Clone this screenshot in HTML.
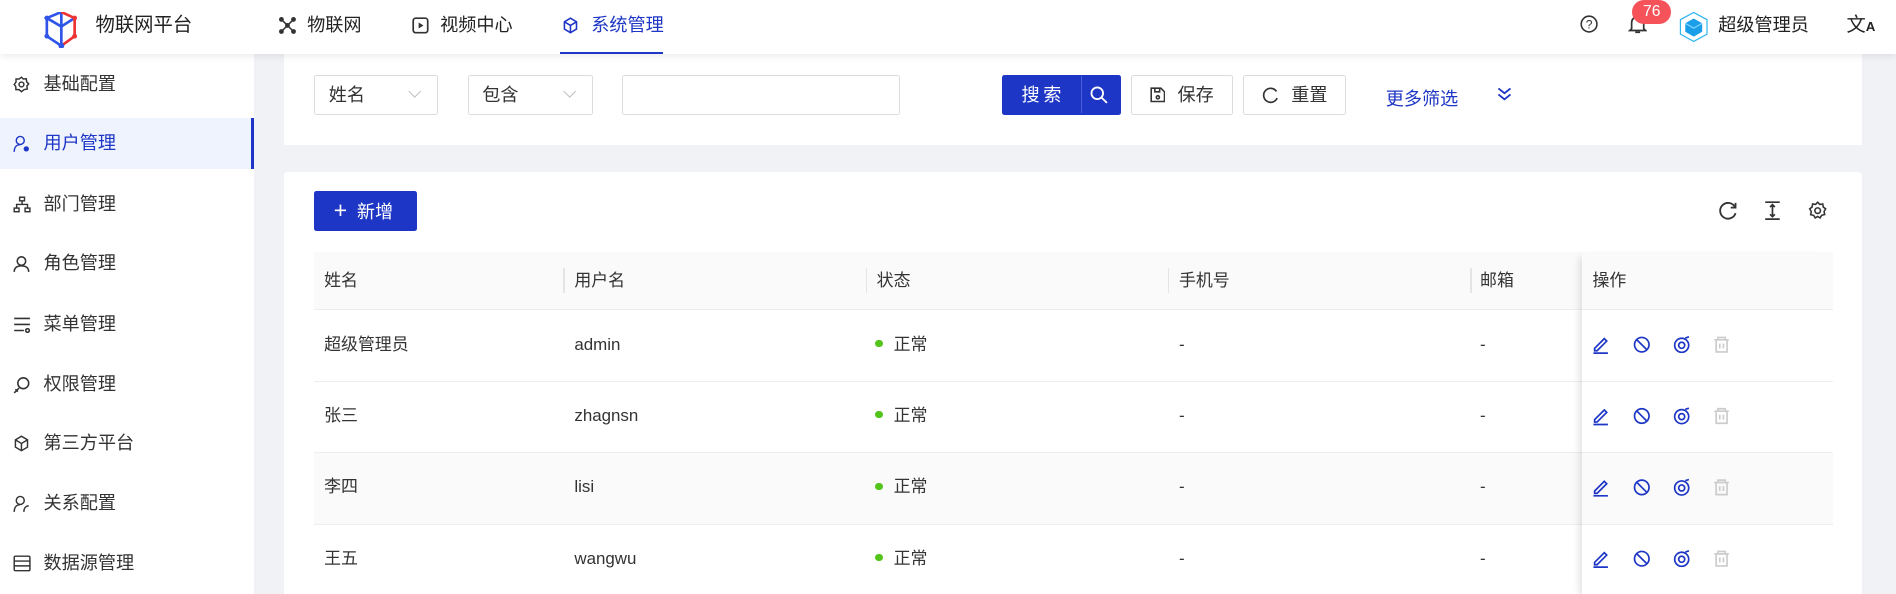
<!DOCTYPE html>
<html><head><meta charset="utf-8"><style>
*{box-sizing:border-box;margin:0;padding:0}
html,body{width:1896px;height:594px;overflow:hidden}
body{background:#f0f2f5;font-family:"Liberation Sans","Noto Sans CJK SC",sans-serif;color:#333}
#w{zoom:1.2092;width:1568px;height:491px;position:relative;overflow:hidden}
.a{position:absolute}
.hdr{left:0;top:0;width:1568px;height:45px;background:#fff;box-shadow:0 2px 6px rgba(0,0,0,.08);z-index:5}
.hdr .t{position:absolute;top:0;line-height:42px;font-size:15px;color:#222}
.side{left:0;top:45px;width:210px;height:446px;background:#fff}
.mi{position:absolute;left:0;width:210px;height:42px;line-height:42px;font-size:15px;color:#333;padding-left:36px}
.mi svg{position:absolute;left:11px;top:14px}
.mi.on{background:#eef3fe;color:#1e36c5;border-right:3px solid #1e36c5}
.card{background:#fff;left:235px;width:1305px}
.sel{position:absolute;top:62px;height:33px;border:1px solid #dcdcdc;border-radius:2px;font-size:15px;line-height:33px;padding-left:11px;color:#333}
.sel.dd:after{content:"";position:absolute;right:14px;top:9px;width:7px;height:7px;border-right:1px solid #bbb;border-bottom:1px solid #bbb;transform:rotate(45deg)}
.btn{position:absolute;top:62px;height:33px;border:1px solid #dcdcdc;border-radius:2px;font-size:15px;line-height:33px;background:#fff;color:#333}
.th{position:absolute;top:208px;height:48px;line-height:48px;font-size:14px;color:#333}
.td{position:absolute;font-size:14px;color:#333;line-height:20px}
.sep{position:absolute;top:222px;width:1px;height:20px;background:#e5e5e5}
</style></head><body><div id="w">
<div class="a hdr">
 <svg class="a" style="left:35px;top:10px" width="32" height="30" viewBox="0 0 32 30"><path d="M4 5 L16 0 L16 12 L4 5Z M4 5 L4 20 L16 28 L16 12" fill="none" stroke="#2f55e8" stroke-width="2.2"/><path d="M16 0 L27 5 L27 20 L16 28" fill="none" stroke="#e33" stroke-width="2.2"/><path d="M16 12 L27 5" stroke="#2f55e8" stroke-width="2.2"/><circle cx="4" cy="5" r="2" fill="#2f55e8"/><circle cx="27" cy="5" r="2" fill="#e33"/><circle cx="27" cy="20" r="2" fill="#e33"/><circle cx="16" cy="28" r="2.4" fill="#2f55e8"/><circle cx="4" cy="20" r="2" fill="#2f55e8"/></svg>
 <div class="t" style="left:79px;font-size:16px">物联网平台</div>
 <svg class="a" style="left:231px;top:14px" width="14" height="14" viewBox="0 0 14 14" fill="#333"><circle cx="2" cy="2" r="2"/><circle cx="12" cy="2" r="2"/><circle cx="2" cy="12" r="2"/><circle cx="12" cy="12" r="2"/><circle cx="7" cy="7" r="2"/><path d="M2 2L12 12M12 2L2 12" stroke="#333" stroke-width="1.3"/></svg>
 <div class="t" style="left:254px">物联网</div>
 <svg class="a" style="left:341px;top:14px" width="14" height="14" viewBox="0 0 14 14"><rect x="1" y="1" width="12" height="12" rx="2" fill="none" stroke="#333" stroke-width="1.4"/><path d="M5.5 4.5L9.5 7L5.5 9.5Z" fill="#333"/></svg>
 <div class="t" style="left:364px">视频中心</div>
 <svg class="a" style="left:465px;top:14px" width="14" height="14" viewBox="0 0 14 14" fill="none" stroke="#1e36c5" stroke-width="1.3"><path d="M2 4L7 1L12 4L12 10L7 13L2 10Z M7 7L7 13 M2 4L7 7L12 4"/></svg>
 <div class="t" style="left:489px;color:#1e36c5">系统管理</div>
 <div class="a" style="left:463px;top:43px;width:85px;height:2px;background:#1e36c5"></div>
 <svg class="a" style="left:1307px;top:12px" width="15" height="15" viewBox="0 0 15 15"><circle cx="7.5" cy="7.5" r="6.5" fill="none" stroke="#333" stroke-width="1.3"/><text x="7.5" y="11" font-size="10" text-anchor="middle" fill="#333" font-family="Liberation Sans">?</text></svg>
 <svg class="a" style="left:1346px;top:11px" width="16" height="18" viewBox="0 0 16 18" fill="none" stroke="#333" stroke-width="1.4"><path d="M3 13V8a5 5 0 0 1 10 0v5l1.5 1.5h-13Z M6 16h4"/></svg>
 <div class="a" style="left:1350px;top:0;width:32px;height:20px;background:#f5525a;border-radius:10px;color:#fff;font-size:13px;text-align:center;line-height:20px">76</div>
 <svg class="a" style="left:1388px;top:8px" width="26" height="28" viewBox="0 0 26 28"><path d="M13 2L24 8L24 20L13 26L2 20L2 8Z" fill="none" stroke="#2fb5f0" stroke-width="1"/><path d="M13 7L20 11L20 18L13 22L6 18L6 11Z" fill="#1a9ee8"/><path d="M6 11L13 15L20 11" fill="none" stroke="#7fd3ff"/></svg>
 <div class="t" style="left:1421px">超级管理员</div>
 <div class="t" style="left:1527px;font-size:16px">文<span style="font-size:11px;font-weight:bold">A</span></div>
</div>
<div class="a side">
 <div class="mi" style="top:4px"><svg width="14" height="14" viewBox="0 0 14 14" fill="none" stroke="#333" stroke-width="1.2"><circle cx="7" cy="7" r="2"/><path d="M7 1L8.5 2.5L11 2.3L11.3 4.8L13 6.5L11.5 8.3L11.8 10.8L9.3 11.2L7 13L5 11.3L2.4 11.3L2.3 8.8L1 7L2.5 5L2.5 2.5L5 2.5Z"/></svg>基础配置</div>
 <div class="mi on" style="top:53px;height:42px"><svg width="15" height="15" viewBox="0 0 15 15" fill="none" stroke="#1e36c5" stroke-width="1.2"><circle cx="6" cy="4.5" r="3.3"/><path d="M1 14c0-4 2-6 5-6"/><circle cx="11" cy="11.5" r="1.6" fill="#1e36c5"/></svg>用户管理</div>
 <div class="mi" style="top:103px"><svg width="15" height="14" viewBox="0 0 15 14" fill="none" stroke="#333" stroke-width="1.2"><rect x="5.5" y="1" width="4" height="3"/><rect x="1" y="10" width="4" height="3"/><rect x="10" y="10" width="4" height="3"/><path d="M7.5 4v3M3 10V7h9v3"/></svg>部门管理</div>
 <div class="mi" style="top:152px"><svg width="14" height="15" viewBox="0 0 14 15" fill="none" stroke="#333" stroke-width="1.3"><circle cx="7" cy="5" r="3.5"/><path d="M1 14c0-3.5 2.5-5 6-5s6 1.5 6 5"/></svg>角色管理</div>
 <div class="mi" style="top:202px"><svg width="15" height="14" viewBox="0 0 15 14" fill="none" stroke="#333" stroke-width="1.3"><path d="M1 2h13M1 7h13M1 12h8"/><circle cx="12" cy="12" r="1.5"/></svg>菜单管理</div>
 <div class="mi" style="top:252px"><svg width="15" height="15" viewBox="0 0 15 15" fill="none" stroke="#333" stroke-width="1.3"><circle cx="8.5" cy="6" r="4.5"/><path d="M5 10L1 14M2 11l2 2"/></svg>权限管理</div>
 <div class="mi" style="top:301px"><svg width="14" height="14" viewBox="0 0 14 14" fill="none" stroke="#333" stroke-width="1.2"><path d="M2 4L7 1L12 4L12 10L7 13L2 10Z M7 7L7 13 M2 4L7 7L12 4"/></svg>第三方平台</div>
 <div class="mi" style="top:350px"><svg width="15" height="15" viewBox="0 0 15 15" fill="none" stroke="#333" stroke-width="1.2"><circle cx="6" cy="4.5" r="3.3"/><path d="M1 14c0-4 2-6 5-6M9 14c0-3 1.5-5 4-5"/></svg>关系配置</div>
 <div class="mi" style="top:400px"><svg width="15" height="14" viewBox="0 0 15 14" fill="none" stroke="#333" stroke-width="1.2"><rect x="1" y="1" width="13" height="12" rx="1"/><path d="M1 5h13M1 9h13"/></svg>数据源管理</div>
</div>
<div class="a card" style="top:45px;height:75px"></div>
<div class="sel dd" style="left:260px;width:102px">姓名</div>
<div class="sel dd" style="left:387px;width:103px">包含</div>
<div class="sel" style="left:514px;width:230px"></div>
<div class="btn" style="left:829px;width:98px;background:#1e36c5;border-color:#1e36c5;color:#fff;padding-left:15px;letter-spacing:3px">搜索<span style="position:absolute;left:64px;top:0;width:1px;height:31px;background:#4a5fd6"></span><svg style="position:absolute;left:72px;top:8px" width="15" height="15" viewBox="0 0 15 15" fill="none" stroke="#fff" stroke-width="1.5"><circle cx="6" cy="6" r="4.8"/><path d="M9.5 9.5L14 14"/></svg></div>
<div class="btn" style="left:935px;width:85px;padding-left:38px"><svg style="position:absolute;left:15px;top:9px" width="13" height="13" viewBox="0 0 13 13" fill="none" stroke="#333" stroke-width="1.3"><path d="M1 1h8l3 3v8H1Z M4 1v3h4V1"/><circle cx="6.5" cy="8.5" r="1.3"/></svg>保存</div>
<div class="btn" style="left:1028px;width:85px;padding-left:39px"><svg style="position:absolute;left:15px;top:8px" width="14" height="15" viewBox="0 0 14 15" fill="none" stroke="#333" stroke-width="1.4"><path d="M12 4.5A5.8 5.8 0 1 0 12.5 10"/></svg>重置</div>
<div class="a" style="left:1146px;top:70px;font-size:15px;color:#1e36c5">更多筛选</div>
<svg class="a" style="left:1237px;top:71px" width="14" height="14" viewBox="0 0 14 14" fill="none" stroke="#1e36c5" stroke-width="1.5"><path d="M2 2l5 4 5-4M2 7l5 4 5-4"/></svg>
<div class="a card" style="top:142px;height:360px;border-radius:3px"></div>
<div class="a" style="left:260px;top:158px;width:85px;height:33px;background:#1e36c5;border-radius:2px;color:#fff;font-size:15px;line-height:33px;padding-left:16px"><span style="font-size:19px;font-weight:300;margin-right:8px">+</span>新增</div>
<svg class="a" style="left:1421px;top:166px" width="16" height="16" viewBox="0 0 16 16" fill="none" stroke="#333" stroke-width="1.5"><path d="M14 5A6.5 6.5 0 1 0 14.5 10"/><path d="M14.5 1.5v4h-4"/></svg>
<svg class="a" style="left:1459px;top:166px" width="14" height="16" viewBox="0 0 14 16" fill="none" stroke="#333" stroke-width="1.4"><path d="M1 1h12M1 15h12M7 3v10M5 5l2-2 2 2M5 11l2 2 2-2"/></svg>
<svg class="a" style="left:1495px;top:166px" width="16" height="16" viewBox="0 0 16 16" fill="none" stroke="#333" stroke-width="1.3"><circle cx="8" cy="8" r="2.3"/><path d="M8 1l1.7 1.8 2.5-.3.4 2.5 2 1.5-1.3 2.2.5 2.5-2.5.6L10 14l-2-1.2L6 14l-1.3-2.1-2.5-.6.5-2.5L1.4 6.5l2-1.5.4-2.5 2.5.3Z"/></svg>
<div class="a" style="left:260px;top:208px;width:1256px;height:48px;background:#fafafa;border-bottom:1px solid #eee"></div>
<div class="a" style="left:260px;top:374px;width:1256px;height:59px;background:#fafafa"></div>
<div class="a" style="left:260px;top:315px;width:1256px;height:1px;background:#eee"></div>
<div class="a" style="left:260px;top:374px;width:1256px;height:1px;background:#eee"></div>
<div class="a" style="left:260px;top:433px;width:1256px;height:1px;background:#eee"></div>
<div class="a" style="left:1308px;top:208px;width:208px;height:290px;box-shadow:-6px 0 6px -4px rgba(0,0,0,.12)"></div>
<div class="sep" style="left:466px"></div><div class="sep" style="left:716px"></div><div class="sep" style="left:966px"></div><div class="sep" style="left:1216px"></div>
<div class="th" style="left:268px">姓名</div><div class="th" style="left:475px">用户名</div><div class="th" style="left:725px">状态</div><div class="th" style="left:975px">手机号</div><div class="th" style="left:1224px">邮箱</div><div class="th" style="left:1317px">操作</div>
<div class="td" style="left:268px;top:275px">超级管理员</div><div class="td" style="left:475px;top:275px">admin</div>
<div class="td" style="left:268px;top:334px">张三</div><div class="td" style="left:475px;top:334px">zhagnsn</div>
<div class="td" style="left:268px;top:393px">李四</div><div class="td" style="left:475px;top:393px">lisi</div>
<div class="td" style="left:268px;top:452px">王五</div><div class="td" style="left:475px;top:452px">wangwu</div>
<div class="td" style="left:724px;top:275px"><span style="display:inline-block;width:6px;height:6px;border-radius:3px;background:#52c41a;margin-right:9px;vertical-align:2px"></span>正常</div>
<div class="td" style="left:724px;top:334px"><span style="display:inline-block;width:6px;height:6px;border-radius:3px;background:#52c41a;margin-right:9px;vertical-align:2px"></span>正常</div>
<div class="td" style="left:724px;top:393px"><span style="display:inline-block;width:6px;height:6px;border-radius:3px;background:#52c41a;margin-right:9px;vertical-align:2px"></span>正常</div>
<div class="td" style="left:724px;top:452px"><span style="display:inline-block;width:6px;height:6px;border-radius:3px;background:#52c41a;margin-right:9px;vertical-align:2px"></span>正常</div>
<div class="td" style="left:975px;top:275px">-</div><div class="td" style="left:1224px;top:275px">-</div>
<div class="td" style="left:975px;top:334px">-</div><div class="td" style="left:1224px;top:334px">-</div>
<div class="td" style="left:975px;top:393px">-</div><div class="td" style="left:1224px;top:393px">-</div>
<div class="td" style="left:975px;top:452px">-</div><div class="td" style="left:1224px;top:452px">-</div>
<svg class="a" style="left:1316px;top:277px" width="120" height="200" viewBox="0 0 120 200">
<defs><g id="ops" fill="none" stroke-width="1.4">
<path d="M3 11L11 3l2 2-8 8H3Z M2 15h12" stroke="#1e36c5"/>
<circle cx="42" cy="8" r="6" stroke="#1e36c5"/><path d="M38 4l8 8" stroke="#1e36c5"/>
<circle cx="75" cy="8.5" r="5.8" stroke="#1e36c5"/><circle cx="75" cy="8.5" r="2.5" stroke="#1e36c5"/><path d="M78 2.5l3-1" stroke="#1e36c5"/>
<path d="M102 4h12M105 4V2h6v2M103.5 4v10h9V4M106.5 7v4M109.5 7v4" stroke="#ccc"/>
</g></defs>
<use href="#ops"/><use href="#ops" y="59"/><use href="#ops" y="118"/><use href="#ops" y="177"/>
</svg>
</div></body></html>
